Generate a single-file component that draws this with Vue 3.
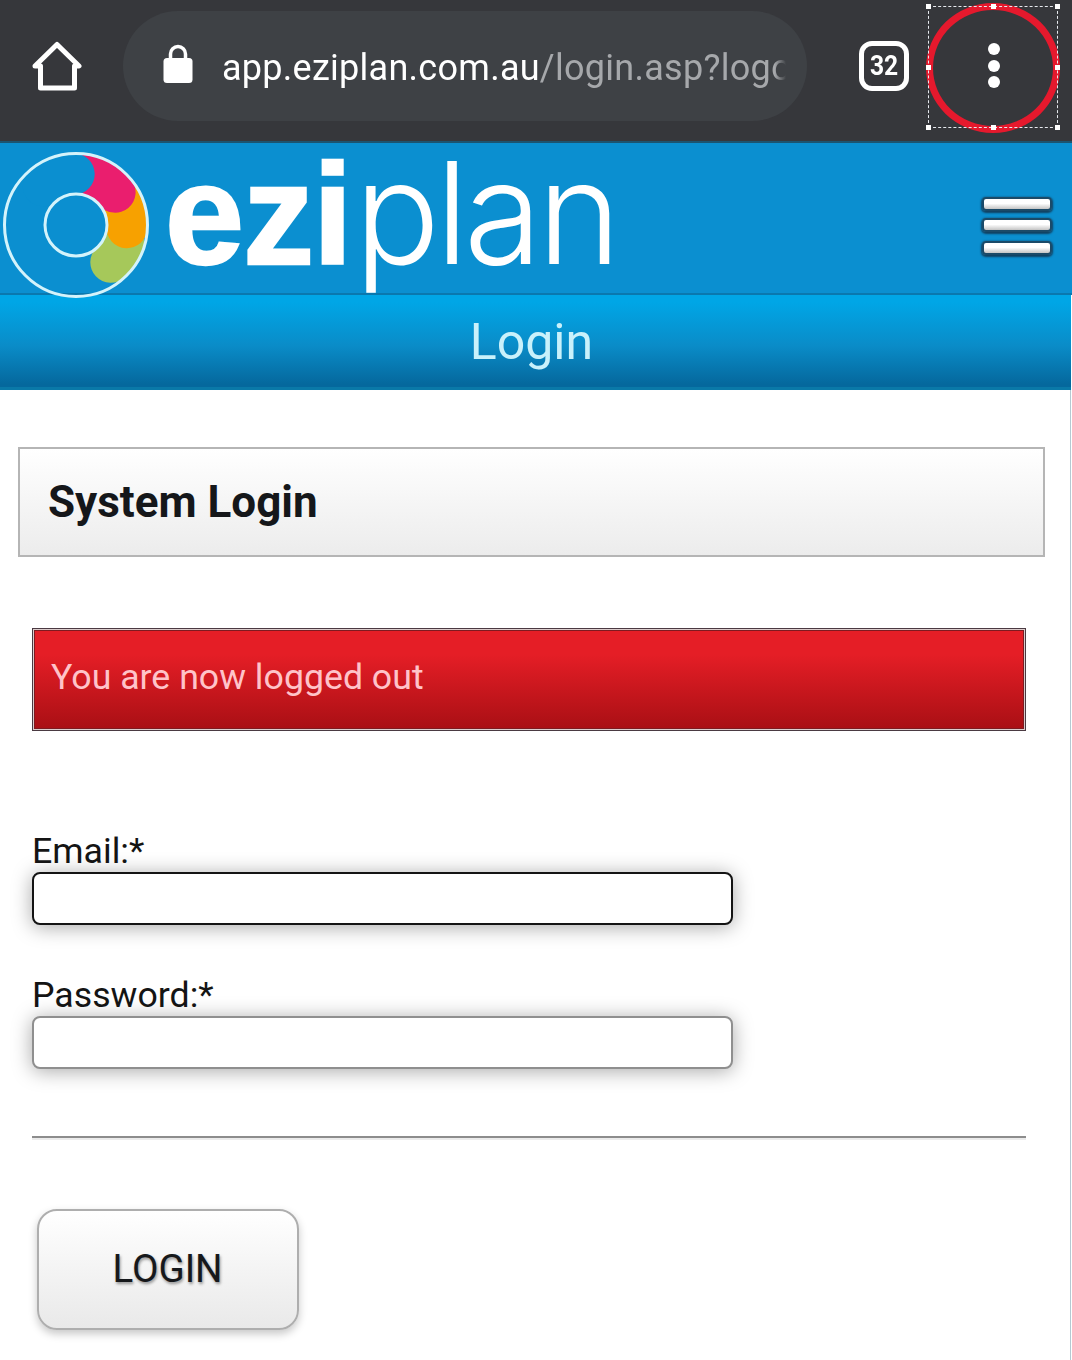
<script setup>
// ring pieces of the logo, angles are degrees clockwise from the top
const point = (deg, r = 51) => {
  const rad = (deg - 90) * Math.PI / 180
  return `${(76 + r * Math.cos(rad)).toFixed(1)} ${(75 + r * Math.sin(rad)).toFixed(1)}`
}
const arc = (from, to) => `M${point(from)} A51 51 0 0 1 ${point(to)}`
const pieces = [
  { color: '#a6c85a', d: arc(110, 137) },
  { color: '#f7a100', d: arc(60, 93) },
  { color: '#ea1e6e', d: arc(10, 50) },
  { color: '#0b8fd0', d: arc(-40, -2) }
]
const handles = [
  'tl', 'tc', 'tr', 'ml', 'mr', 'bl', 'bc', 'br'
]
</script>

<template>
  <div class="page">
    <div class="toolbar">
      <svg class="home" viewBox="30 40 52 52" width="52" height="52">
        <path d="M35 66 L57 44.5 L79 66 H74.5 V88 H40.5 V66 Z" fill="none" stroke="#fff" stroke-width="5" stroke-linejoin="round" />
      </svg>
      <div class="pill">
        <svg class="lock" viewBox="0 0 30 40" width="30" height="40">
          <path d="M7.5 16 V10 a7.5 7.5 0 0 1 15 0 V16" fill="none" stroke="#fff" stroke-width="3.5" />
          <rect x="0.5" y="14" width="29" height="25" rx="3.5" fill="#fff" />
        </svg>
        <div class="url"><span class="host">app.eziplan.com.au</span><span class="path">/login.asp?logout</span></div>
      </div>
      <div class="tabs"><span>32</span></div>
      <div class="more">
        <i></i><i></i><i></i>
      </div>
      <!-- annotation drawn over the screenshot -->
      <div class="circle"></div>
      <div class="selection">
        <b v-for="h in handles" :key="h" :class="h"></b>
      </div>
    </div>

    <div class="brand">
      <svg class="mark" viewBox="0 0 152 150" width="152" height="150">
        <defs>
          <clipPath id="ring"><circle cx="76" cy="75" r="72" /></clipPath>
        </defs>
        <g clip-path="url(#ring)">
          <path v-for="p in pieces" :key="p.color" :d="p.d" :stroke="p.color" stroke-width="41" stroke-linecap="round" fill="none" />
        </g>
        <circle cx="76" cy="75" r="71.5" fill="none" stroke="#d4f3fb" stroke-width="3" />
        <circle cx="76" cy="75" r="31" fill="#0b8fd0" stroke="#d4f3fb" stroke-width="3" />
      </svg>
      <div class="word"><span class="ezi">ezi</span><span class="plan">plan</span></div>
      <div class="burger"><i></i><i></i><i></i></div>
    </div>

    <div class="title">Login</div>

    <div class="content">
      <div class="panel">System Login</div>
      <div class="alert">You are now logged out</div>

      <label class="label first">Email:*</label>
      <div class="input focused"></div>
      <label class="label">Password:*</label>
      <div class="input"></div>

      <div class="rule"></div>
      <button class="login">LOGIN</button>
    </div>
  </div>
</template>

<style>
html, body {
  margin: 0;
  background: #fff;
}
</style>

<style scoped>
.page {
  width: 1072px;
  height: 1360px;
  overflow: hidden;
  font-family: Roboto, "Liberation Sans", sans-serif;
  box-sizing: border-box;
}
.toolbar {
  position: relative;
  height: 143px;
  box-sizing: border-box;
  display: flex;
  align-items: flex-start;
  background: #36373b;
  border-bottom: 2px solid #1c5470;
}
.home {
  margin: 40px 0 0 30px;
}
.pill {
  margin: 11px 0 0 41px;
  width: 684px;
  height: 110px;
  border-radius: 55px;
  background: #3e4145;
  display: flex;
  align-items: center;
  box-sizing: border-box;
  padding-left: 40px;
}
.lock {
  flex: none;
  margin-top: -5px;
}
.url {
  margin-left: 29px;
  padding-top: 4px;
  width: 564px;
  overflow: hidden;
  white-space: nowrap;
  font-size: 36px;
  color: #fff;
  letter-spacing: 0.27px;
  -webkit-mask-image: linear-gradient(to right, #000 98%, transparent);
  mask-image: linear-gradient(to right, #000 98%, transparent);
}
.path {
  color: #a6a8ab;
}
.tabs {
  margin: 41px 0 0 52px;
  width: 50px;
  height: 50px;
  box-sizing: border-box;
  border: 5px solid #fff;
  border-radius: 13px;
  color: #fff;
  font-size: 28px;
  font-weight: 700;
  line-height: 40px;
  text-align: center;
}
.tabs span {
  display: inline-block;
  transform: scaleX(0.88);
}
.more {
  margin: 43px 0 0 79px;
  display: flex;
  flex-direction: column;
  gap: 4.5px;
}
.more i {
  width: 12px;
  height: 12px;
  border-radius: 50%;
  background: #fff;
}
.circle {
  position: absolute;
  left: 926px;
  top: 3px;
  width: 134px;
  height: 130px;
  box-sizing: border-box;
  border: 7px solid #e5192d;
  border-radius: 50%;
}
.selection {
  position: absolute;
  left: 928px;
  top: 6px;
  width: 130px;
  height: 122px;
  box-sizing: border-box;
  border: 1px dashed #e6e9ee;
}
.selection b {
  position: absolute;
  width: 5px;
  height: 5px;
  background: #fff;
}
.tl, .ml, .bl { left: -3px; }
.tc, .bc { left: 62px; }
.tr, .mr, .br { right: -3px; }
.tl, .tc, .tr { top: -3px; }
.ml, .mr { top: 58px; }
.bl, .bc, .br { bottom: -3px; }

.brand {
  height: 152px;
  box-sizing: border-box;
  display: flex;
  align-items: flex-start;
  background: #0b8fd0;
  border-bottom: 2px solid #0a78ae;
}
.mark {
  flex: none;
  margin-top: 7px;
}
.word {
  margin: -26px 0 0 13px;
  height: 150px;
  color: #fff;
  white-space: nowrap;
  line-height: 190px;
  display: flex;
  align-items: baseline;
}
.ezi {
  font-family: "Liberation Sans", sans-serif;
  font-weight: 700;
  font-size: 142px;
  letter-spacing: -1px;
  -webkit-text-stroke: 2.5px #fff;
}
.plan {
  margin-left: 3px;
  font-family: Inter, sans-serif;
  font-weight: 300;
  font-size: 142px;
  letter-spacing: -4.5px;
}
.burger {
  margin: 54px 20px 0 auto;
  display: flex;
  flex-direction: column;
}
.burger i {
  display: block;
  width: 66px;
  height: 10px;
  border-radius: 4px;
  background: linear-gradient(#fff 45%, #c4c4c4);
  border: 2px solid #1b4a68;
  box-shadow: 0 1px 2px 1px #12405f;
}
.burger i:nth-child(2) {
  margin-top: 7px;
}
.burger i:nth-child(3) {
  margin-top: 9px;
}

.title {
  height: 95px;
  width: 1071px;
  padding-right: 8px;
  box-sizing: border-box;
  background: linear-gradient(#00a6e6 8%, #0a8cc8 55%, #05689d 97%);
  border-bottom: 3px solid #0a79a8;
  color: #c9f1fb;
  font-size: 50px;
  line-height: 94px;
  text-align: center;
}
.content {
  width: 1071px;
  height: 970px;
  box-sizing: border-box;
  border-right: 1px solid #b5c9d2;
  padding: 57px 0 0 32px;
}
.panel {
  width: 1027px;
  height: 110px;
  margin-left: -14px;
  box-sizing: border-box;
  border: 2px solid #b5b5b5;
  background: linear-gradient(#fff, #ececec);
  padding-left: 28px;
  font-size: 44px;
  font-weight: 700;
  line-height: 106px;
  color: #15171a;
}
.alert {
  width: 994px;
  height: 103px;
  margin-top: 71px;
  box-sizing: border-box;
  border: 1px solid #4a3a42;
  background: linear-gradient(#e51e26 25%, #a80f14);
  box-shadow: inset 0 0 0 1px #dccccc, inset 0 0 0 2px #7e1a20;
  padding-left: 18px;
  font-size: 35.7px;
  line-height: 97px;
  color: #ffc3c9;
}
.label {
  display: block;
  margin-top: 49px;
  margin-bottom: -1px;
  font-size: 35.7px;
  line-height: 43px;
  color: #141414;
}
.label.first {
  margin-top: 99px;
}
.input {
  width: 701px;
  height: 53px;
  box-sizing: border-box;
  border: 2px solid #8f8f8f;
  border-radius: 8px;
  background: #fff;
  box-shadow: 0 2px 20px rgba(0, 0, 0, 0.35);
}
.input.focused {
  border-color: #141414;
}
.rule {
  width: 994px;
  height: 2px;
  margin-top: 67px;
  background: #8d8d8d;
  border-bottom: 2px solid #ececec;
}
.login {
  display: block;
  width: 262px;
  height: 121px;
  margin: 69px 0 0 5px;
  padding: 0 1px 2px 0;
  box-sizing: border-box;
  border: 2px solid #aeaeae;
  border-radius: 20px;
  background: linear-gradient(#fff, #e9e9e9);
  box-shadow: 0 4px 8px rgba(0, 0, 0, 0.22);
  font-family: Roboto, sans-serif;
  font-size: 38.5px;
  color: #16181b;
  text-shadow: 1px 2px 3px rgba(0, 0, 0, 0.4);
}
</style>
